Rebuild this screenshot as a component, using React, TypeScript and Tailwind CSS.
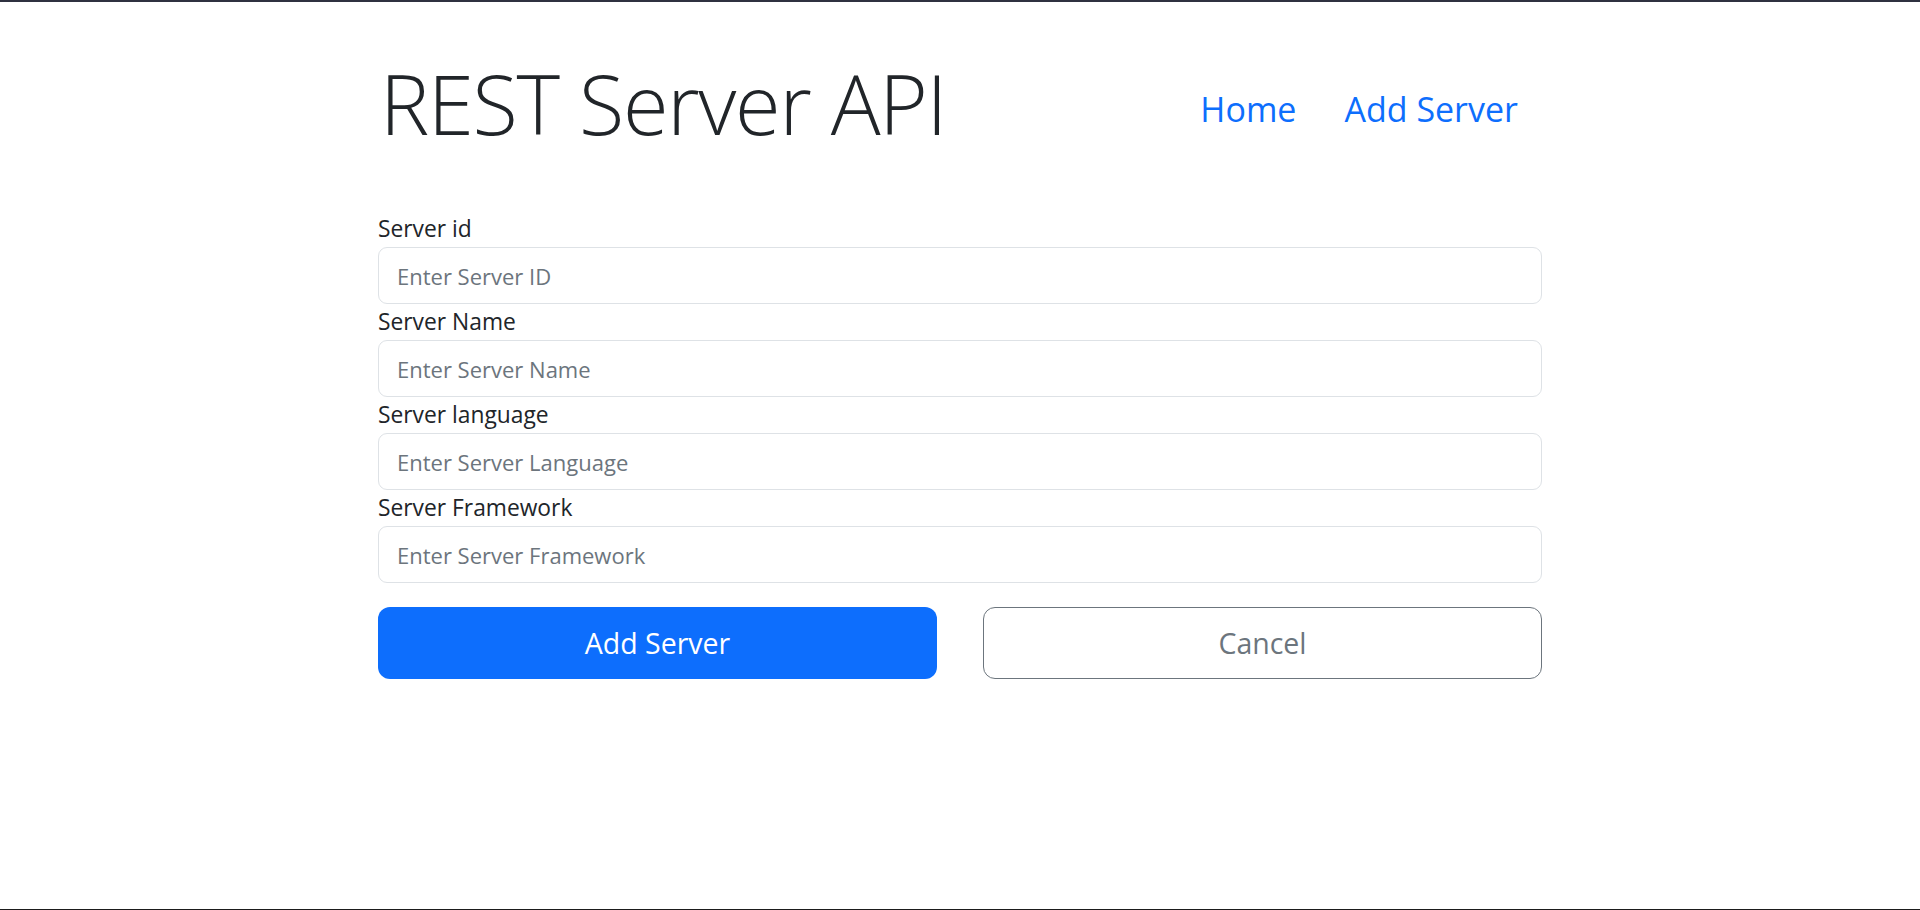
const fields = [
  { label: "Server id", placeholder: "Enter Server ID" },
  { label: "Server Name", placeholder: "Enter Server Name" },
  { label: "Server language", placeholder: "Enter Server Language" },
  { label: "Server Framework", placeholder: "Enter Server Framework" },
];

export default function App() {
  return (
    <main className="h-[910px] bg-white border-t-2 border-t-[#2f3140] border-b border-b-[#1b1b1b] font-['Open_Sans',sans-serif] text-[#212529]">
      <div className="w-[1164px] mx-auto">
        {/* header */}
        <header className="flex items-center justify-between pt-[50px]">
          <h1 className="text-[83px] font-light leading-[101px] tracking-[-1.3px] pl-[2px]">REST Server API</h1>
          <nav className="flex items-center text-[34px] text-[#0d6efd] leading-[54px] mt-[12px]">
            <a href="#" className="px-[24px]">Home</a>
            <a href="#" className="pl-[24px] pr-[24px]">Add Server</a>
          </nav>
        </header>

        {/* form */}
        <form className="mt-[58px]">
          {fields.map((f) => (
            <div key={f.label}>
              <label className="block text-[22.8px] leading-[36px]">{f.label}</label>
              <input
                type="text"
                placeholder={f.placeholder}
                className="block w-full h-[57px] px-[18px] text-[22px] border border-[#dee2e6] rounded-[9px] placeholder:text-[#6c757d] outline-none"
              />
            </div>
          ))}

          <div className="grid grid-cols-2 gap-[46px] mt-[24px]">
            <button type="button" className="h-[72px] rounded-[12px] bg-[#0d6efd] text-white text-[28.5px]">
              Add Server
            </button>
            <button type="button" className="h-[72px] rounded-[12px] border border-[#6c757d] text-[#6c757d] text-[28.5px]">
              Cancel
            </button>
          </div>
        </form>
      </div>
    </main>
  );
}
